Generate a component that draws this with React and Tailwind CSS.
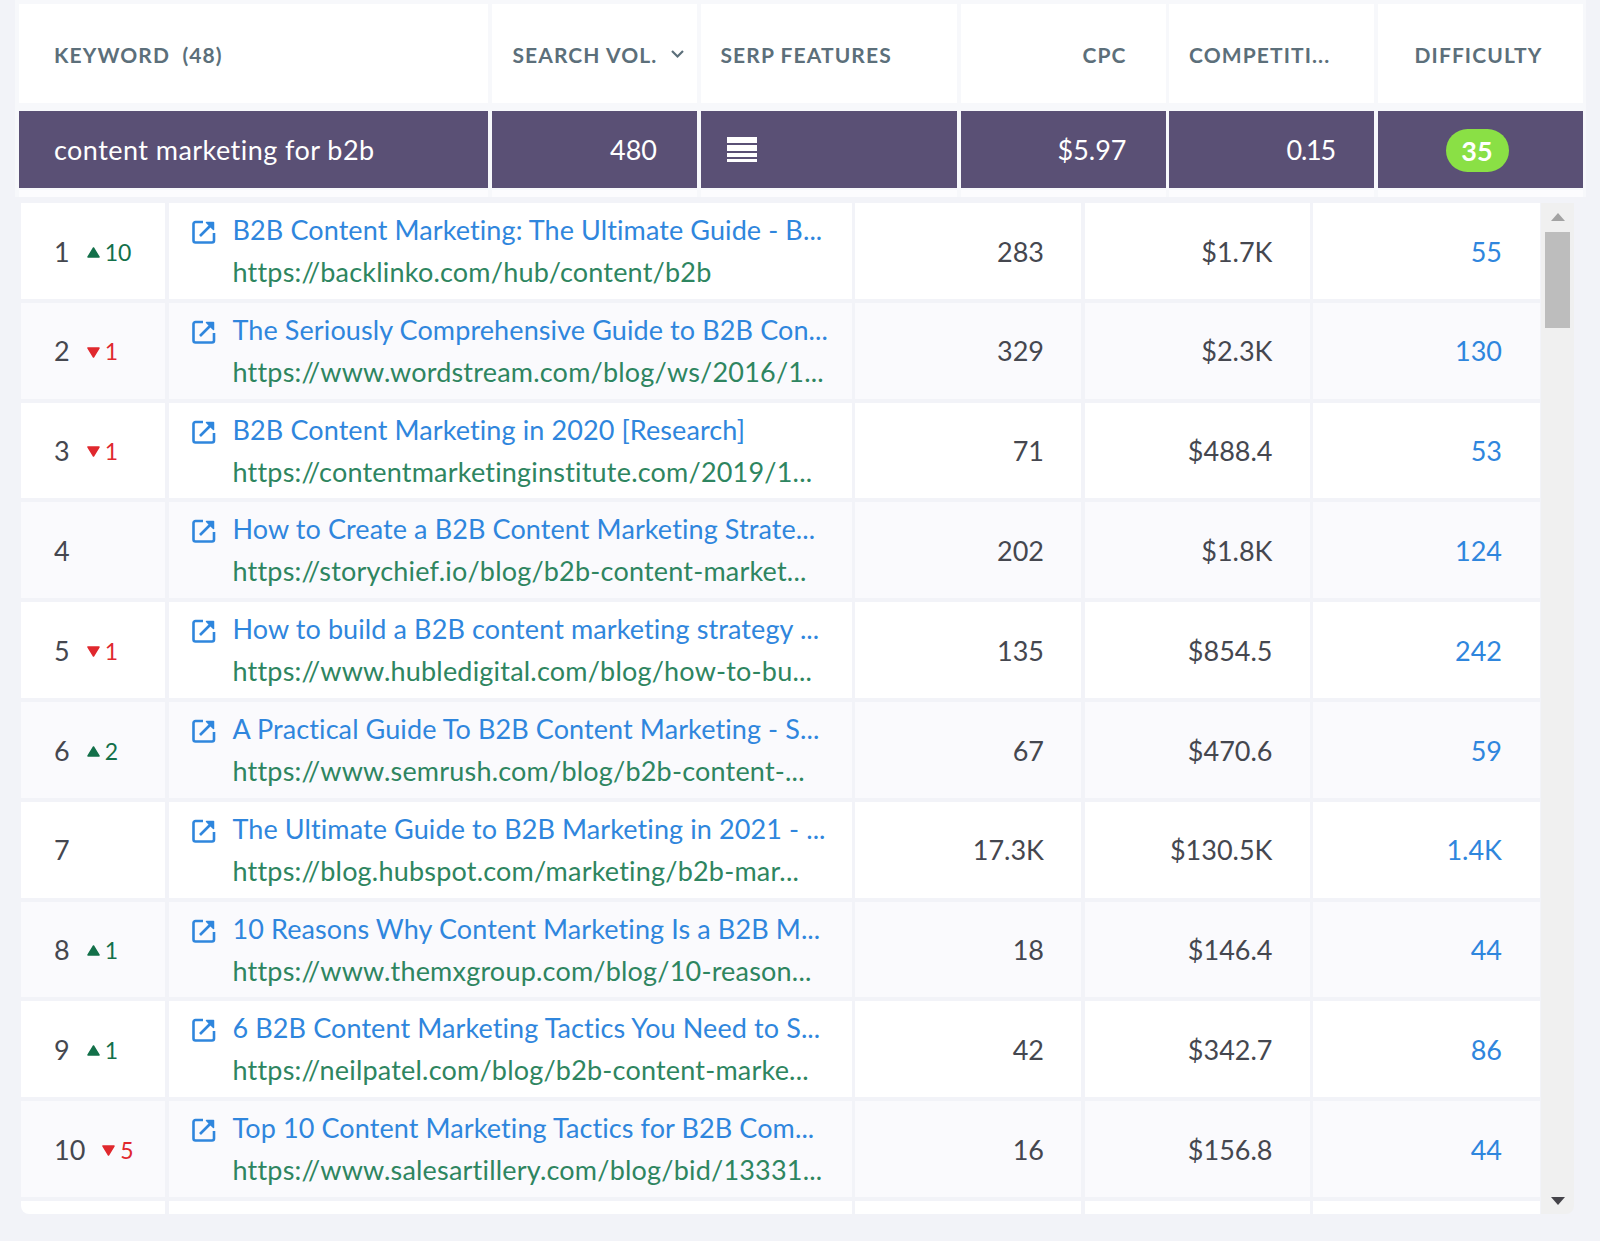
import React from 'react';

const FONT = 'font-["Lato",sans-serif]';

const ROWS = [
  { rank: 1, trend: 'up', delta: 10, title: 'B2B Content Marketing: The Ultimate Guide - B...', url: 'https://backlinko.com/hub/content/b2b', a: '283', b: '$1.7K', c: '55' },
  { rank: 2, trend: 'down', delta: 1, title: 'The Seriously Comprehensive Guide to B2B Con...', url: 'https://www.wordstream.com/blog/ws/2016/1...', a: '329', b: '$2.3K', c: '130' },
  { rank: 3, trend: 'down', delta: 1, title: 'B2B Content Marketing in 2020 [Research]', url: 'https://contentmarketinginstitute.com/2019/1...', a: '71', b: '$488.4', c: '53' },
  { rank: 4, title: 'How to Create a B2B Content Marketing Strate...', url: 'https://storychief.io/blog/b2b-content-market...', a: '202', b: '$1.8K', c: '124' },
  { rank: 5, trend: 'down', delta: 1, title: 'How to build a B2B content marketing strategy ...', url: 'https://www.hubledigital.com/blog/how-to-bu...', a: '135', b: '$854.5', c: '242' },
  { rank: 6, trend: 'up', delta: 2, title: 'A Practical Guide To B2B Content Marketing - S...', url: 'https://www.semrush.com/blog/b2b-content-...', a: '67', b: '$470.6', c: '59' },
  { rank: 7, title: 'The Ultimate Guide to B2B Marketing in 2021 - ...', url: 'https://blog.hubspot.com/marketing/b2b-mar...', a: '17.3K', b: '$130.5K', c: '1.4K' },
  { rank: 8, trend: 'up', delta: 1, title: '10 Reasons Why Content Marketing Is a B2B M...', url: 'https://www.themxgroup.com/blog/10-reason...', a: '18', b: '$146.4', c: '44' },
  { rank: 9, trend: 'up', delta: 1, title: '6 B2B Content Marketing Tactics You Need to S...', url: 'https://neilpatel.com/blog/b2b-content-marke...', a: '42', b: '$342.7', c: '86' },
  { rank: 10, trend: 'down', delta: 5, title: 'Top 10 Content Marketing Tactics for B2B Com...', url: 'https://www.salesartillery.com/blog/bid/13331...', a: '16', b: '$156.8', c: '44' },
];

const HeadCell = ({ className, children }) => (
  <div className={`flex h-full items-center bg-white pt-[2px] text-[21px] font-bold tracking-[1.1px] text-[#5c6f7a] ${className}`}>{children}</div>
);

const TopCell = ({ className, children }) => (
  <div className={`flex h-full items-center bg-[#5a5075] pt-px text-[27px] text-white ${className}`}>{children}</div>
);

const ExternalIcon = () => (
  <svg width="24" height="24" viewBox="0 0 24 24" fill="none" stroke="#2f86dd" strokeWidth="2.600" strokeLinejoin="round" className="shrink-0">
    <path d="M11 2H3.500A2 2 0 0 0 1.500 4v16.500a2 2 0 0 0 2 2H20a2 2 0 0 0 2-2V13" />
    <path d="M8 16 20.500 3.500" />
    <path d="M14.500 2.500h7v7z" fill="#2f86dd" strokeWidth="1.500" />
  </svg>
);

const Trend = ({ dir, delta }) => (
  <div className="ml-[17px] flex items-center gap-[5px] text-[23px]">
    {dir === 'up' ? (
      <svg width="13" height="11" viewBox="0 0 13 11" className="mt-px"><path d="M6.500 1 12 10H1z" fill="#13704a" stroke="#13704a" strokeWidth="1.500" strokeLinejoin="round" /></svg>
    ) : (
      <svg width="13" height="11" viewBox="0 0 13 11" className="mt-px"><path d="M1 1h11L6.500 10z" fill="#e0282e" stroke="#e0282e" strokeWidth="1.500" strokeLinejoin="round" /></svg>
    )}
    <span className={dir === 'up' ? 'text-[#13704a]' : 'text-[#e0282e]'}>{delta}</span>
  </div>
);

const Row = ({ row, index }) => {
  const bg = index % 2 === 0 ? 'bg-white' : 'bg-[#fafafd]';
  return (
    <div className="flex h-[99.8px] shrink-0 gap-[3.500px] border-b-4 border-[#f2f3f8] text-[27px] text-[#45474f]">
      <div className={`flex w-[144px] items-center pl-[33px] pt-[2px] ${bg}`}>
        <span>{row.rank}</span>
        {row.trend && <Trend dir={row.trend} delta={row.delta} />}
      </div>
      <div className={`flex w-[683px] gap-[17px] pl-[23px] pt-[6px] ${bg}`}>
        <div className="pt-[11px]"><ExternalIcon /></div>
        <div className="whitespace-nowrap leading-[42px]">
          <div className="tracking-[0.1px] text-[#2f86dd]">{row.title}</div>
          <div className="tracking-[0.2px] text-[#2e8560]">{row.url}</div>
        </div>
      </div>
      <div className={`flex w-[226px] items-center justify-end pr-[37px] pt-[2px] ${bg}`}>{row.a}</div>
      <div className={`flex w-[225px] items-center justify-end pr-[37px] pt-[2px] ${bg}`}>{row.b}</div>
      <div className={`flex w-[227px] items-center justify-end pr-[38px] pt-[2px] text-[#2f86dd] ${bg}`}>{row.c}</div>
    </div>
  );
};

const App = () => (
  <div className={`h-[1241px] w-[1600px] overflow-hidden bg-[#f2f3f8] ${FONT}`}>
    <div className="ml-[15px] h-[197px] w-[1571px] bg-[#f7f8fb] pl-[4px] pt-1">
      {/* Header */}
      <div className="flex h-[99px] w-[1564px] gap-[3.500px]">
        <HeadCell className="w-[469px] pl-[35px]">KEYWORD&nbsp; (48)</HeadCell>
        <HeadCell className="w-[205.500px] pl-[21px]">
          SEARCH VOL.
          <svg width="15" height="10" viewBox="0 0 15 10" fill="none" stroke="#5c6f7a" strokeWidth="2.200" className="mb-[2px] ml-[13px]"><path d="M2 2l5.500 5.500L13 2" /></svg>
        </HeadCell>
        <HeadCell className="w-[256.500px] pl-[20px]">SERP FEATURES</HeadCell>
        <HeadCell className="w-[205px] justify-end pr-[39px]">CPC</HeadCell>
        <HeadCell className="w-[205px] pl-[20px]">COMPETITI...</HeadCell>
        <HeadCell className="w-[205px] pl-[37px]">DIFFICULTY</HeadCell>
      </div>

      {/* Selected keyword */}
      <div className="mt-2 flex h-[77px] w-[1564px] gap-[3.500px]">
        <TopCell className="w-[469px] pl-[35px] tracking-[0.45px]">content marketing for b2b</TopCell>
        <TopCell className="w-[205.500px] justify-end pr-[40px]">480</TopCell>
        <TopCell className="w-[256.500px] pl-[26px]">
          <div className="mb-[2px] flex w-[30px] flex-col gap-[2px]">
            <div className="h-[6px] bg-white" />
            <div className="h-[6px] bg-white" />
            <div className="h-[4px] bg-white" />
            <div className="h-[3px] bg-white" />
          </div>
        </TopCell>
        <TopCell className="w-[205px] justify-end pr-[39px]">$5.97</TopCell>
        <TopCell className="w-[205px] justify-end pr-[39px] tracking-[-1.200px]">0.15</TopCell>
        <TopCell className="w-[205px] pl-[68px]">
          <span className="flex h-[43px] w-[63px] items-center justify-center rounded-full bg-[#8ae045] pt-[3px] font-bold">35</span>
        </TopCell>
      </div>

      <div className="mt-[2px] flex h-[7px] w-[1564px] gap-[3.500px]">
        <div className="w-[469px] bg-[#fcfcfe]" />
        <div className="w-[205.500px] bg-[#fcfcfe]" />
        <div className="w-[256.500px] bg-[#fcfcfe]" />
        <div className="w-[205px] bg-[#fcfcfe]" />
        <div className="w-[205px] bg-[#fcfcfe]" />
        <div className="w-[205px] bg-[#fcfcfe]" />
      </div>
    </div>

    {/* Results */}
    <div className="ml-[21px] mt-[6px] flex h-[1011px] w-[1553px] overflow-hidden rounded-b-lg">
      <div className="flex w-[1520px] flex-col bg-[#f2f3f8]">
        {ROWS.map((row, i) => <Row key={row.rank} row={row} index={i} />)}
        <div className="flex h-[13px] shrink-0 gap-[3.500px]">
          <div className="w-[144px] bg-white" />
          <div className="w-[683px] bg-white" />
          <div className="w-[226px] bg-white" />
          <div className="w-[225px] bg-white" />
          <div className="w-[227px] bg-white" />
        </div>
      </div>
      <div className="flex w-[33px] flex-col items-center bg-[#f0f0f0] pb-[9px] pt-[10px]">
        <svg width="14" height="8" viewBox="0 0 14 8"><path d="M7 0l7 8H0z" fill="#a3a3a3" /></svg>
        <div className="mt-[11px] h-[96px] w-[25px] bg-[#bdbdbd]" />
        <svg width="14" height="8" viewBox="0 0 14 8" className="mt-auto"><path d="M0 0h14L7 8z" fill="#45444a" /></svg>
      </div>
    </div>
  </div>
);

export default App;
